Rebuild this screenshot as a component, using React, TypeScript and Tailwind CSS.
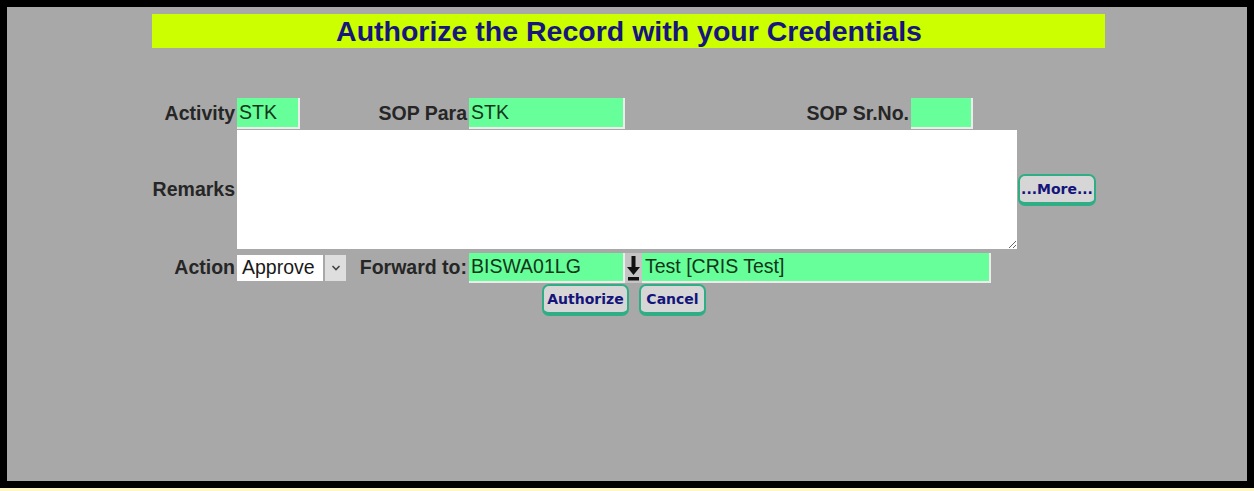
const labelCls =
  "font-['Liberation_Sans',Arial,sans-serif] font-bold text-[19.5px] text-[#262626] text-right pr-[2px] leading-none";
const fieldCls =
  "bg-[#66ff99] border-r-2 border-b-2 border-[#ececec] font-['Liberation_Sans',Arial,sans-serif] text-[19.5px] text-[#13361a] leading-none pl-[2px] flex items-center";
const btnCls =
  "bg-[#d6d6d6] rounded-[7px] border-2 border-b-[4px] border-[#2fae86] font-['DejaVu_Sans',Verdana,sans-serif] font-bold text-[14px] text-[#14147a] leading-none flex items-center justify-center";

function DownIcon() {
  return (
    <svg width="17" height="30" viewBox="0 0 17 30" className="shrink-0 bg-[#c4c4c4]">
      <path d="M6.5 3h4v11h4.5L8.5 22 2 14h4.5z" fill="#111" />
      <rect x="3" y="24" width="11" height="3.5" fill="#111" />
    </svg>
  );
}

export default function App() {
  return (
    <div className="w-[1254px] h-[491px] bg-[#fff7c6] overflow-hidden">
      <div className="h-[488px] border-[7px] border-black bg-[#a8a8a8] flex flex-col">
        <div className="mt-[7px] ml-[145px] w-[953px] h-[34px] bg-[#ccff00] flex items-center justify-center">
          <h1 className="font-['Liberation_Sans',Arial,sans-serif] font-bold text-[28.5px] text-[#16167c] leading-none pl-[1px]">
            Authorize the Record with your Credentials
          </h1>
        </div>

        {/* row 1 */}
        <div className="mt-[50px] flex items-center h-[31px]">
          <span className={`${labelCls} w-[230px]`}>Activity</span>
          <div className={`${fieldCls} w-[63px] h-[31px]`}>STK</div>
          <span className={`${labelCls} w-[169px]`}>SOP Para</span>
          <div className={`${fieldCls} w-[156px] h-[31px]`}>STK</div>
          <span className={`${labelCls} w-[286px] pr-[1px]`}>SOP Sr.No.</span>
          <div className={`${fieldCls} w-[62px] h-[31px]`}></div>
        </div>

        {/* remarks */}
        <div className="mt-[1px] flex items-center">
          <span className={`${labelCls} w-[230px]`}>Remarks</span>
          <textarea className="w-[780px] h-[119px] bg-white border-0 outline-none p-1 text-[16px]" />
          <button className={`${btnCls} ml-[1px] w-[78px] h-[32px]`}>...More...</button>
        </div>

        {/* action row */}
        <div className="mt-[4px] flex items-center h-[30px]">
          <span className={`${labelCls} w-[230px]`}>Action</span>
          <div className="flex items-center h-[26px] w-[109px]">
            <div className="bg-white h-[26px] w-[86px] flex items-center pl-[5px] font-['Liberation_Sans',Arial,sans-serif] text-[19.5px] text-[#1a1a1a] leading-none">
              Approve
            </div>
            <div className="ml-[2px] h-[26px] w-[21px] bg-[#dedede] flex items-center justify-center">
              <svg width="10" height="8" viewBox="0 0 10 8">
                <path d="M1.5 2l3.5 3.5L8.5 2" fill="none" stroke="#444" strokeWidth="1.6" />
              </svg>
            </div>
          </div>
          <span className={`${labelCls} w-[123px]`}>Forward to:</span>
          <div className={`${fieldCls} w-[156px] h-[30px]`}>BISWA01LG</div>
          <DownIcon />
          <div className={`${fieldCls} w-[349px] h-[30px] pl-[3px]`}>Test [CRIS Test]</div>
        </div>

        {/* buttons */}
        <div className="mt-[1px] flex gap-[10px] pl-[535px]">
          <button className={`${btnCls} w-[87px] h-[32px]`}>Authorize</button>
          <button className={`${btnCls} w-[67px] h-[32px]`}>Cancel</button>
        </div>
      </div>
    </div>
  );
}
